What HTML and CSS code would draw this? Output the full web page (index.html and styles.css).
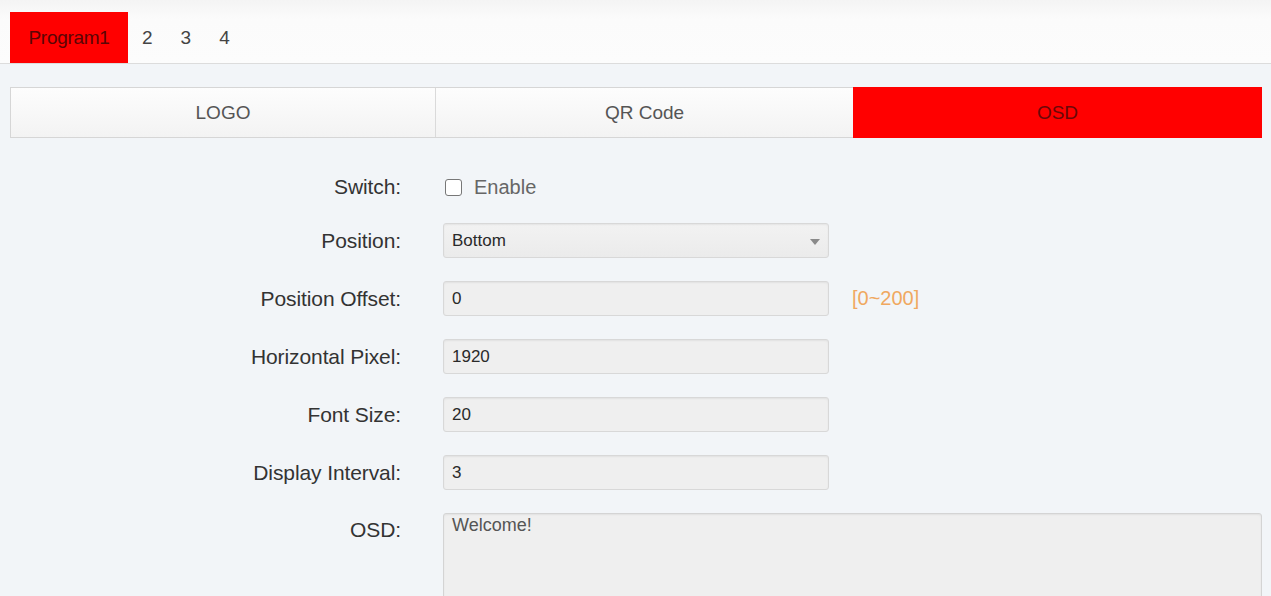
FILE: index.html
```html
<!DOCTYPE html>
<html lang="en">
<head>
<meta charset="utf-8">
<title>OSD</title>
<link rel="stylesheet" href="styles.css">
</head>
<body>
<div class="topbar">
  <div class="prog active">Program1</div>
  <div class="prog">2</div>
  <div class="prog">3</div>
  <div class="prog">4</div>
</div>
<div class="subtabs">
  <div class="subtab">LOGO</div>
  <div class="subtab">QR Code</div>
  <div class="subtab active">OSD</div>
</div>
<div class="form">
  <div class="row row-switch">
    <label class="lbl">Switch:</label>
    <div class="field">
      <span class="check"></span><span class="enable">Enable</span>
    </div>
  </div>
  <div class="row">
    <label class="lbl">Position:</label>
    <div class="field">
      <div class="input select">Bottom<span class="arrow"></span></div>
    </div>
  </div>
  <div class="row">
    <label class="lbl">Position Offset:</label>
    <div class="field">
      <div class="input">0</div><span class="range">[0~200]</span>
    </div>
  </div>
  <div class="row">
    <label class="lbl">Horizontal Pixel:</label>
    <div class="field"><div class="input">1920</div></div>
  </div>
  <div class="row">
    <label class="lbl">Font Size:</label>
    <div class="field"><div class="input">20</div></div>
  </div>
  <div class="row">
    <label class="lbl">Display Interval:</label>
    <div class="field"><div class="input">3</div></div>
  </div>
  <div class="row row-osd">
    <label class="lbl">OSD:</label>
    <div class="field"><div class="textarea">Welcome!</div></div>
  </div>
</div>
</body>
</html>
```
FILE: styles.css
```css
html, body {
  margin: 0;
  padding: 0;
}
body {
  background: #f2f5f8;
  font-family: "Liberation Sans", Arial, sans-serif;
  color: #333;
  width: 1271px;
  height: 596px;
  overflow: hidden;
}
.topbar {
  display: flex;
  height: 51px;
  padding: 12px 0 0 10px;
  background: linear-gradient(#f4f4f4, #fbfbfb 30%, #fcfcfc);
  border-bottom: 1px solid #dcdcdc;
}
.prog {
  display: flex;
  align-items: center;
  justify-content: center;
  padding: 0 7px;
  font-size: 19px;
  color: #444;
  margin-right: 14px;
}
.prog:nth-child(2) { margin-left: 7px; }
.prog.active {
  width: 118px;
  padding: 0;
  margin-right: 0;
  background: #ff0000;
  color: #5a0505;
  font-size: 19px;
  letter-spacing: -0.3px;
}
.subtabs {
  display: grid;
  grid-template-columns: 425px 417px 1fr;
  margin: 23px 9px 0 10px;
  height: 51px;
  box-sizing: border-box;
  border: 1px solid #d6d6d6;
  background: linear-gradient(#fdfdfd, #f3f3f3);
}
.subtab {
  display: flex;
  align-items: center;
  justify-content: center;
  font-size: 19px;
  color: #555;
}
.subtab:first-child {
  border-right: 1px solid #dadada;
}
.subtab.active {
  background: #ff0000;
  color: #6a0808;
  margin: -1px -1px -1px 0;
}
.form {
  display: flex;
  flex-direction: column;
  gap: 23px;
  padding-top: 36px;
}
.row {
  display: grid;
  grid-template-columns: 401px 1fr;
  column-gap: 42px;
  align-items: center;
  height: 35px;
}
.row-switch {
  height: 26px;
}
.row-osd {
  align-items: start;
  height: 110px;
}
.lbl {
  text-align: right;
  font-size: 21px;
  letter-spacing: -0.1px;
  color: #333;
}
.row-osd .lbl {
  padding-top: 5px;
}
.field {
  display: flex;
  align-items: center;
}
.check {
  width: 15px;
  height: 15px;
  border: 1.5px solid #777;
  border-radius: 3px;
  background: #fff;
  margin-left: 2px;
  margin-right: 12px;
}
.enable {
  font-size: 20px;
  color: #666;
}
.input {
  position: relative;
  width: 386px;
  height: 35px;
  box-sizing: border-box;
  border: 1px solid #d8d8d8;
  border-radius: 3px;
  background: #efefef;
  box-shadow: inset 0 1px 2px rgba(0,0,0,0.06);
  padding-left: 8px;
  display: flex;
  align-items: center;
  font-size: 17px;
  color: #2a2a2a;
}
.select {
  background: linear-gradient(#f2f2f2, #ebebeb);
}
.arrow {
  position: absolute;
  right: 8px;
  top: 15px;
  border-left: 5px solid transparent;
  border-right: 5px solid transparent;
  border-top: 6px solid #8a8a8a;
}
.range {
  margin-left: 23px;
  font-size: 20px;
  color: #f0a860;
}
.textarea {
  width: 819px;
  height: 110px;
  box-sizing: border-box;
  border: 1px solid #d4d4d4;
  border-radius: 3px;
  background: #efefef;
  box-shadow: inset 0 1px 2px rgba(0,0,0,0.06);
  padding: 1px 8px;
  font-size: 18px;
  color: #555;
}
```
